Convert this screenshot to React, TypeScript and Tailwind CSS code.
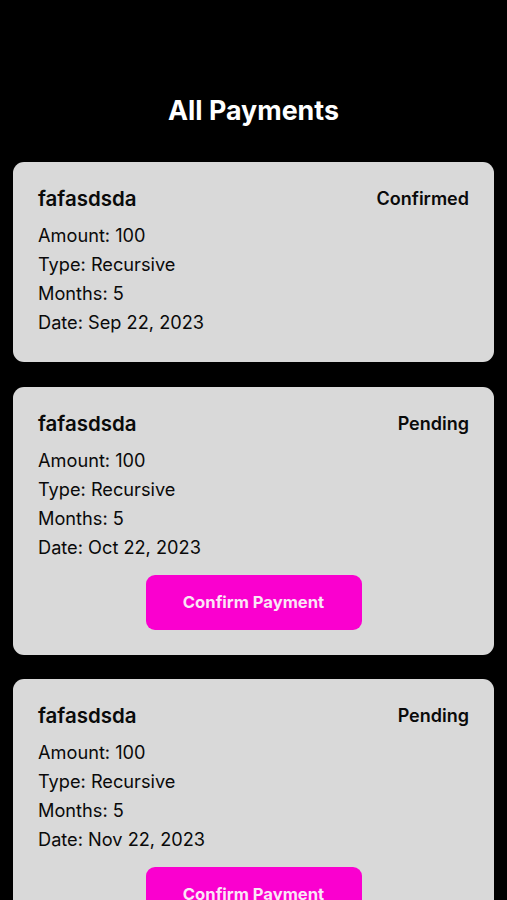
const payments = [
  { name: "fafasdsda", status: "Confirmed", amount: 100, type: "Recursive", months: 5, date: "Sep 22, 2023" },
  { name: "fafasdsda", status: "Pending", amount: 100, type: "Recursive", months: 5, date: "Oct 22, 2023" },
  { name: "fafasdsda", status: "Pending", amount: 100, type: "Recursive", months: 5, date: "Nov 22, 2023" },
];

function PaymentCard({ p }: { p: (typeof payments)[number] }) {
  return (
    <div className="rounded-[11px] bg-[#d9d9d9] px-[25px] pt-[25px] pb-[25px] text-[#0a0a0a]">
      <div className="flex items-center justify-between">
        <span className="text-[20.5px] leading-[24px] font-semibold">{p.name}</span>
        <span className="text-[18px] leading-[24px] font-semibold">{p.status}</span>
      </div>
      <div className="mt-[10px] text-[18.2px] leading-[29px]">
        <div>Amount: {p.amount}</div>
        <div>Type: {p.type}</div>
        <div>Months: {p.months}</div>
        <div>Date: {p.date}</div>
      </div>
      {p.status === "Pending" && (
        <div className="mt-[13px] flex justify-center">
          <button className="h-[55px] w-[216px] rounded-[9px] bg-[#fa00cf] text-[16.6px] font-bold text-[#fbe6f6]">
            Confirm Payment
          </button>
        </div>
      )}
    </div>
  );
}

export default function App() {
  return (
    <div
      className="min-h-[900px] bg-black px-[13px] pt-[94px] pb-10"
      style={{ fontFamily: "Inter, 'Noto Sans', sans-serif" }}
    >
      <h1 className="mb-[36px] text-center text-[26.8px] leading-[32px] font-bold text-white">
        All Payments
      </h1>
      <div className="flex flex-col gap-[24.5px]">
        {payments.map((p, i) => (
          <PaymentCard key={i} p={p} />
        ))}
      </div>
    </div>
  );
}
